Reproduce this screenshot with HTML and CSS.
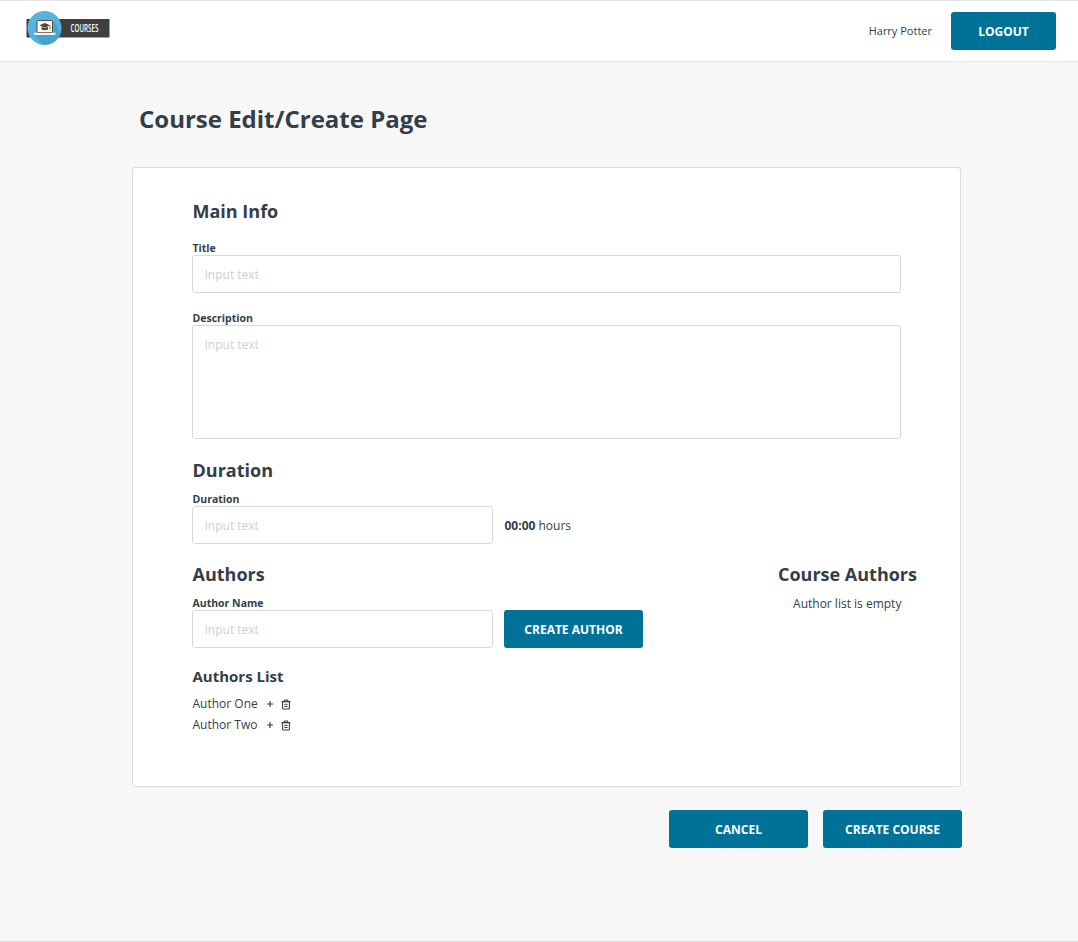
FILE: index.html
```html
<!DOCTYPE html>
<html lang="en">
<head>
<meta charset="utf-8">
<title>Course Edit/Create Page</title>
<link rel="stylesheet" href="styles.css">
</head>
<body>
<svg class="defs" aria-hidden="true">
  <symbol id="plus" viewBox="0 0 8 8"><path d="M4 1v6M1 4h6" fill="none" stroke="#333e48" stroke-width="1.2"/></symbol>
  <symbol id="trash" viewBox="0 0 10 11"><path d="M.6 2.6h8.800M3 2.400L3.600 1h2.800L7 2.400M1.600 2.800v6.200q0 1 1 1h4.800q1 0 1-1V2.800" fill="none" stroke="#333e48" stroke-width="1.100"/><path d="M3.400 5.300h3.200M3.400 7.500h3.200" stroke="#333e48" stroke-width="1"/></symbol>
</svg>
<header class="header">
  <a class="logo" aria-label="Courses">
    <svg width="84" height="36" viewBox="0 0 84 36">
      <rect x="0.500" y="9" width="83" height="18.500" fill="#3f3f3f"/>
      <circle cx="18.500" cy="18" r="17" fill="#54b4dd"/>
      <path d="M8 25.500l9 9.300a17 17 0 0 0 17.800-12L28 11z" fill="#43a5d0"/>
      <rect x="11" y="10.600" width="15.500" height="11.900" rx=".6" fill="#fffaf0" stroke="#5b4a42" stroke-width="1"/>
      <path d="M8 22.800h21.500v1.200q0 1-1 1H9q-1 0-1-1z" fill="#fbf3ea"/>
      <path d="M13.500 15.300l5.300-2.400 5.300 2.400-5.300 2.400z" fill="#4d4440"/>
      <path d="M15.600 16.700v2.700q3.200 1.600 6.400 0v-2.700l-3.200 1.500z" fill="#4d4440"/>
      <path d="M24 15.500v4" stroke="#4d4440" stroke-width=".8"/>
      <text class="logo-text" transform="translate(44.500 22) scale(.57 1)">COURSES</text>
    </svg>
  </a>
  <div class="account"><span class="user">Harry Potter</span><button class="btn btn-logout">LOGOUT</button></div>
</header>
<main class="page">
  <h1 class="page-title">Course Edit/Create Page</h1>
  <form class="card">
    <section class="main-info">
      <h2 class="heading">Main Info</h2>
      <label class="label" for="title">Title</label>
      <input class="input" id="title" placeholder="Input text">
      <label class="label" for="desc">Description</label>
      <textarea class="input textarea" id="desc" placeholder="Input text"></textarea>
    </section>
    <section class="section duration">
      <h2 class="heading">Duration</h2>
      <label class="label" for="duration">Duration</label>
      <div class="row"><input class="input short" id="duration" placeholder="Input text"><span class="hours"><b>00:00</b> hours</span></div>
    </section>
    <div class="authors">
      <section class="section">
        <h2 class="heading">Authors</h2>
        <label class="label" for="author">Author Name</label>
        <div class="row"><input class="input short" id="author" placeholder="Input text"><button type="button" class="btn">CREATE AUTHOR</button></div>
        <h3 class="subheading">Authors List</h3>
        <ul class="list">
          <li class="author"><span class="name">Author One</span><svg class="plus"><use href="#plus"/></svg><svg class="trash"><use href="#trash"/></svg></li>
          <li class="author"><span class="name">Author Two</span><svg class="plus"><use href="#plus"/></svg><svg class="trash"><use href="#trash"/></svg></li>
        </ul>
      </section>
      <section class="section course-authors">
        <h2 class="heading">Course Authors</h2>
        <p class="empty">Author list is empty</p>
      </section>
    </div>
  </form>
  <div class="actions"><button class="btn">CANCEL</button><button class="btn">CREATE COURSE</button></div>
</main>
</body>
</html>
```
FILE: styles.css
```css
* { box-sizing: border-box; }
body {
  margin: 0;
  min-height: 942px;
  background: #f7f7f7;
  border-top: 1px solid #e5e5e5;
  border-bottom: 1px solid #dedede;
  color: #333e48;
  font: 12px "Open Sans", sans-serif;
}
h1, h2, h3, p, ul { margin: 0; padding: 0; }
.defs { display: none; }
.header {
  display: flex;
  justify-content: space-between;
  height: 61px;
  padding: 9px 22px 0 26px;
  background: #fff;
  border-bottom: 1px solid #e8e8e8;
}
.logo svg { display: block; }
.logo-text { font: 600 11px "Open Sans", sans-serif; fill: #fff; }
.account { display: flex; align-items: center; gap: 19px; height: 42px; }
.user { padding-bottom: 2px; font-size: 11px; }
.btn {
  width: 139px;
  height: 38px;
  padding: 0;
  border: 0;
  border-radius: 3px;
  background: #007298;
  color: #fff;
  font: bold 12px "Open Sans", sans-serif;
}
.btn-logout { width: 105px; }
.page { width: 830px; margin-left: 132px; padding-top: 39px; }
.page-title { padding-left: 7px; font-size: 24px; line-height: 36px; font-weight: 700; }
.card {
  width: 829px;
  height: 620px;
  margin-top: 30px;
  padding: 31px 43px 0 59px;
  background: #fff;
  border: 1px solid #dcdcdc;
  border-radius: 3px;
}
.main-info { width: 709px; }
.heading { padding-left: .5px; font-size: 18px; line-height: 24px; font-weight: 700; }
.label { display: block; margin-top: 11px; padding-left: .5px; font-size: 10.5px; line-height: 13px; font-weight: 700; }
.main-info .label { margin-top: 19px; }
.input {
  display: block;
  width: 100%;
  height: 38px;
  padding: 0 11.5px;
  border: 1px solid #d8d8d8;
  border-radius: 3px;
  background: #fff;
  font: 12px "Open Sans", sans-serif;
}
.input::placeholder { color: #cfcfcf; opacity: 1; }
.textarea { height: 114px; padding: 10px 11.5px; resize: none; }
.short { width: 301px; }
.section { padding-top: 18px; }
.duration { padding-top: 19px; }
.row { display: flex; align-items: center; gap: 11px; }
.hours { padding-left: .5px; }
.authors { display: flex; justify-content: space-between; }
.subheading { margin-top: 18px; padding-left: .5px; font-size: 15px; line-height: 20px; }
.list { margin-top: 7px; list-style: none; }
.author { display: flex; align-items: center; height: 21px; }
.name { width: 74px; padding-left: .5px; }
.plus { width: 8px; height: 8px; margin-top: 1px; }
.trash { width: 10px; height: 11px; margin: 1px 0 0 7px; }
.course-authors { text-align: center; }
.empty { margin-top: 9px; line-height: 18px; }
.actions { display: flex; justify-content: flex-end; gap: 15px; margin-top: 23px; }
```
